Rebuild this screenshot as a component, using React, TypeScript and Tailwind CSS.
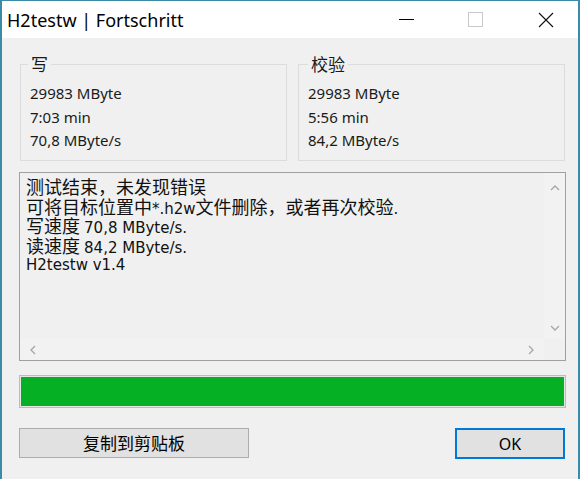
import React from "react";

const latin = { fontFamily: '"Noto Sans", "Open Sans", "Noto Sans CJK SC", sans-serif' };
const mono = { fontFamily: '"DejaVu Sans", "Noto Sans", "Noto Sans CJK SC", sans-serif' };
const cjk = { fontFamily: '"Noto Sans CJK SC", "Noto Sans", sans-serif' };

function Group({ title, rows, off }: { title: string; rows: string[]; off: string }) {
  return (
    <fieldset className="border border-[#dcdcdc] w-[267px] h-[108px] pl-[9px] pt-[7px]">
      <legend className={`${off} px-[3px] text-[17px] leading-[22px] text-[#1a1a1a]`} style={cjk}>
        {title}
      </legend>
      <div className="flex flex-col text-[15px] leading-[23.5px] text-[#1a1a1a]" style={latin}>
        {rows.map((r) => (
          <div key={r}>{r}</div>
        ))}
      </div>
    </fieldset>
  );
}

function Line({ parts }: { parts: { t: string; zh?: boolean }[] }) {
  return (
    <div className="h-[19.6px] leading-[19.6px] whitespace-nowrap text-[#111]">
      {parts.map((p, i) =>
        p.zh ? (
          <span key={i} className="text-[18px] leading-[19px]" style={cjk}>
            {p.t}
          </span>
        ) : (
          <span key={i} className="text-[15px] leading-[19px]" style={mono}>
            {p.t}
          </span>
        )
      )}
    </div>
  );
}

export default function App() {
  return (
    <div className="w-[582px] h-[479px] overflow-hidden bg-white">
      <div className="w-[580px] h-[479px] border-l-2 border-r-2 border-t border-[#3b8ba6] flex flex-col">
        {/* Title bar */}
        <div className="h-[37px] bg-white flex items-center shrink-0">
          <div className="pl-[5px] text-[18px] text-black leading-none" style={latin}>
            H2testw | Fortschritt
          </div>
          <div className="ml-auto flex items-center h-full">
            <div className="w-[46px] h-full flex items-center justify-center mr-[23px]">
              <div className="w-[15px] h-[1px] bg-black" />
            </div>
            <div className="w-[46px] h-full flex items-center justify-center mr-[25px]">
              <div className="w-[15px] h-[15px] border border-[#c8c8c8]" />
            </div>
            <div className="w-[46px] h-full flex items-center justify-center mr-[9px]">
              <svg width="16" height="16" viewBox="0 0 16 16">
                <path d="M1 1 L15 15 M15 1 L1 15" stroke="#111" strokeWidth="1.1" fill="none" />
              </svg>
            </div>
          </div>
        </div>

        {/* Body */}
        <div className="flex-1 bg-[#f0f0f0] pl-[17px] pr-[12px] flex flex-col">
          <div className="flex gap-[11px] mt-[15px] pl-[1px]">
            <Group title="写" off="-ml-[2px]" rows={["29983 MByte", "7:03 min", "70,8 MByte/s"]} />
            <Group title="校验" off="ml-0" rows={["29983 MByte", "5:56 min", "84,2 MByte/s"]} />
          </div>

          {/* Text area */}
          <div className="mt-[11px] h-[189px] border border-[#a0a0a0] bg-[#f0f0f0] flex flex-col">
            <div className="flex flex-1">
              <div className="flex-1 pl-[6px] pt-[4px]">
                <Line parts={[{ t: "测试结束，未发现错误", zh: true }]} />
                <Line
                  parts={[
                    { t: "可将目标位置中", zh: true },
                    { t: "*.h2w" },
                    { t: "文件删除，或者再次校验", zh: true },
                    { t: "." },
                  ]}
                />
                <Line parts={[{ t: "写速度 ", zh: true }, { t: "70,8 MByte/s." }]} />
                <Line parts={[{ t: "读速度 ", zh: true }, { t: "84,2 MByte/s." }]} />
                <Line parts={[{ t: "H2testw v1.4" }]} />
              </div>
              <div className="w-[21px] bg-[#f2f2f2] flex flex-col items-center justify-between pt-[12px] pb-[8px]">
                <svg width="10" height="6" viewBox="0 0 10 6">
                  <path d="M1 5 L5 1 L9 5" stroke="#a6a6a6" strokeWidth="1.3" fill="none" />
                </svg>
                <svg width="10" height="6" viewBox="0 0 10 6">
                  <path d="M1 1 L5 5 L9 1" stroke="#a6a6a6" strokeWidth="1.3" fill="none" />
                </svg>
              </div>
            </div>
            <div className="h-[21px] flex">
              <div className="flex-1 bg-[#f2f2f2] flex items-center justify-between px-[10px]">
                <svg width="6" height="10" viewBox="0 0 6 10">
                  <path d="M5 1 L1 5 L5 9" stroke="#a6a6a6" strokeWidth="1.3" fill="none" />
                </svg>
                <svg width="6" height="10" viewBox="0 0 6 10">
                  <path d="M1 1 L5 5 L1 9" stroke="#a6a6a6" strokeWidth="1.3" fill="none" />
                </svg>
              </div>
              <div className="w-[21px] bg-[#f0f0f0]" />
            </div>
          </div>

          {/* Progress */}
          <div className="mt-[14px] h-[33px] border border-[#bcbcbc] bg-[#e6e6e6] p-[1px]">
            <div className="h-full w-full bg-[#06b025]" />
          </div>

          {/* Buttons */}
          <div className="mt-[20px] flex justify-between">
            <button
              className="w-[230px] h-[30px] bg-[#e1e1e1] border border-[#adadad] text-[17px] text-black flex items-center justify-center"
              style={cjk}
            >
              复制到剪贴板
            </button>
            <button
              className="w-[110px] h-[31px] bg-[#e1e1e1] border-2 border-[#0078d7] text-[16px] text-black flex items-center justify-center mr-[1px]"
              style={latin}
            >
              OK
            </button>
          </div>
        </div>
      </div>
    </div>
  );
}
